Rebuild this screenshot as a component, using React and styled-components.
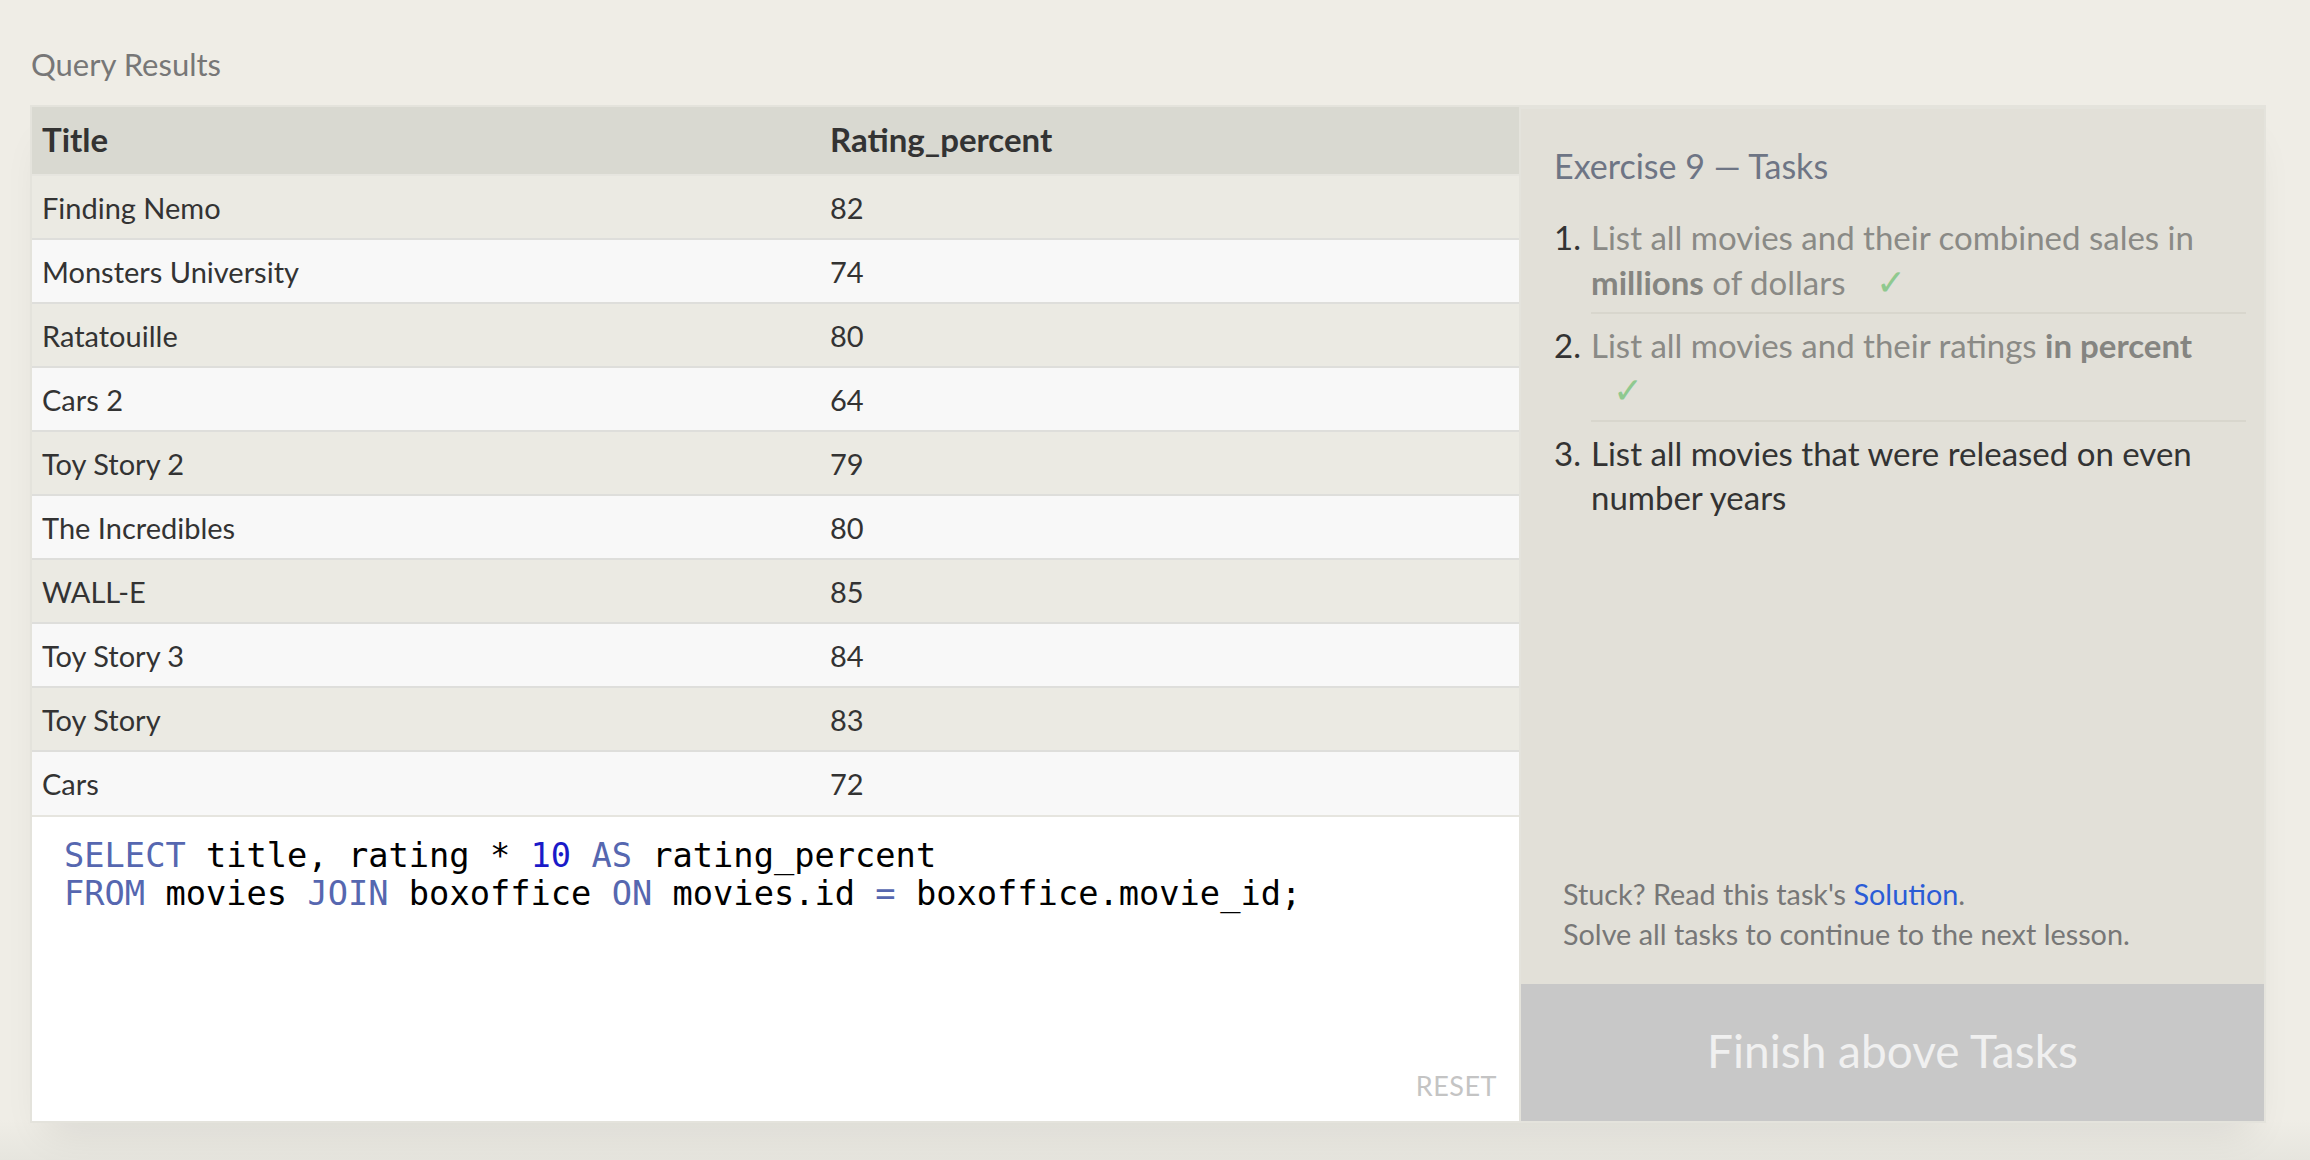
import React from "react";
import styled, { createGlobalStyle } from "styled-components";

const Global = createGlobalStyle`
  html, body {
    margin: 0;
    padding: 0;
    background: #efede6;
  }
  body {
    font-family: "Lato", "Liberation Sans", sans-serif;
    color: #333;
  }
`;

const Page = styled.div`
  width: 2310px;
  height: 1160px;
  box-sizing: border-box;
  padding: 44px 0 0 30px;
  overflow: hidden;
  background: linear-gradient(to bottom, #efede6 0, #efede6 1120px, #e6e5de 1160px);
`;

const Heading = styled.h2`
  margin: 0 0 21px 1px;
  font-size: 31px;
  line-height: 40px;
  font-weight: 400;
  color: #777;
`;

const Frame = styled.div`
  width: 2236px;
  height: 1018px;
  box-sizing: border-box;
  display: flex;
  border: 2px solid #e4e3dc;
  background: #e4e3dc;
  box-shadow: 0 24px 40px -16px rgba(0, 0, 0, 0.09);
`;

const LeftPanel = styled.div`
  width: 1487px;
  flex: none;
  display: flex;
  flex-direction: column;
  background: #fff;
`;

const Table = styled.table`
  width: 100%;
  border-collapse: collapse;
  font-size: 29px;
  color: #333;
`;

const HeadCell = styled.th`
  height: 68px;
  padding: 0 10px 4px;
  text-align: left;
  font-size: 33px;
  font-weight: 700;
  background: #d9d9d1;
  width: ${(p) => p.$w || "auto"};
  box-sizing: border-box;
`;

const Row = styled.tr`
  background: ${(p) => (p.$odd ? "#ebeae3" : "#f8f8f8")};
  border-top: 2px solid ${(p) => (p.$first ? "#e6e5df" : "#dededb")};
`;

const Cell = styled.td`
  height: 64px;
  padding: 0 10px;
  box-sizing: border-box;
`;

const CodeArea = styled.div`
  position: relative;
  flex: 1;
  border-top: 2px solid #e6e5df;
  padding: 20px 0 0 32px;
  font-family: "DejaVu Sans Mono", "Liberation Mono", monospace;
  font-size: 33.7px;
  line-height: 38px;
  color: #000;
  white-space: pre;
`;

const Kw = styled.span`
  color: ${(p) => (p.$num ? "#1a1ac8" : "#5667b0")};
`;

const Reset = styled.div`
  position: absolute;
  right: 22px;
  bottom: 16px;
  font-family: "Lato", "Liberation Sans", sans-serif;
  font-size: 27px;
  color: #c4c4c4;
  letter-spacing: 0.5px;
`;

const RightPanel = styled.div`
  flex: 1;
  margin-left: 2px;
  margin-top: 2px;
  display: flex;
  flex-direction: column;
  background: #e2e0d8;
`;

const TaskBody = styled.div`
  flex: 1;
  padding: 36px 18px 0 33px;
  display: flex;
  flex-direction: column;
`;

const TaskTitle = styled.h3`
  margin: 0 0 19px;
  font-size: 34px;
  line-height: 42px;
  font-weight: 400;
  color: #6e7585;
`;

const TaskList = styled.ol`
  margin: 0;
  padding: 0;
  list-style: none;
`;

const Task = styled.li`
  display: flex;
  font-size: 33px;
  line-height: 44px;
`;

const Num = styled.span`
  width: 37px;
  flex: none;
  color: #333;
  padding-top: 9px;
`;

const TaskText = styled.div`
  flex: 1;
  padding: 9px 0 8px;
  border-bottom: ${(p) => (p.$last ? "none" : "2px solid #d8d6cd")};
  color: ${(p) => (p.$done ? "#8a8a86" : "#333")};
  b {
    font-weight: 700;
    color: #858581;
  }
`;

const Check = styled.span`
  display: inline-block;
  width: 30px;
  margin-left: 22px;
  color: #8fc98f;
  font-size: 36px;
`;

const Footer = styled.div`
  margin-top: auto;
  padding: 0 0 30px 9px;
  font-size: 28.8px;
  line-height: 40px;
  color: #777;
  a {
    color: #2a5cd6;
    text-decoration: none;
  }
`;

const FinishButton = styled.div`
  height: 137px;
  flex: none;
  display: flex;
  align-items: center;
  justify-content: center;
  background: #c8c8c8;
  color: #f0f0f0;
  font-size: 46px;
  padding-bottom: 4px;
  box-sizing: border-box;
`;

const rows = [
  ["Finding Nemo", 82],
  ["Monsters University", 74],
  ["Ratatouille", 80],
  ["Cars 2", 64],
  ["Toy Story 2", 79],
  ["The Incredibles", 80],
  ["WALL-E", 85],
  ["Toy Story 3", 84],
  ["Toy Story", 83],
  ["Cars", 72],
];

export default function App() {
  return (
    <>
      <Global />
      <Page>
        <Heading>Query Results</Heading>
        <Frame>
          <LeftPanel>
            <Table>
              <thead>
                <tr>
                  <HeadCell $w="788px">Title</HeadCell>
                  <HeadCell>Rating_percent</HeadCell>
                </tr>
              </thead>
              <tbody>
                {rows.map(([t, r], i) => (
                  <Row key={t} $odd={i % 2 === 0} $first={i === 0}>
                    <Cell>{t}</Cell>
                    <Cell>{r}</Cell>
                  </Row>
                ))}
              </tbody>
            </Table>
            <CodeArea>
              <Kw>SELECT</Kw> title, rating * <Kw $num>10</Kw> <Kw>AS</Kw> rating_percent{"\n"}
              <Kw>FROM</Kw> movies <Kw>JOIN</Kw> boxoffice <Kw>ON</Kw> movies.id <Kw>=</Kw> boxoffice.movie_id;
              <Reset>RESET</Reset>
            </CodeArea>
          </LeftPanel>
          <RightPanel>
            <TaskBody>
              <TaskTitle>Exercise 9 — Tasks</TaskTitle>
              <TaskList>
                <Task>
                  <Num>1.</Num>
                  <TaskText $done>
                    List all movies and their combined sales in <b>millions</b> of dollars <Check>✓</Check>
                  </TaskText>
                </Task>
                <Task>
                  <Num>2.</Num>
                  <TaskText $done>
                    List all movies and their ratings <b>in percent</b> <Check>✓</Check>
                  </TaskText>
                </Task>
                <Task>
                  <Num>3.</Num>
                  <TaskText $last>List all movies that were released on even number years</TaskText>
                </Task>
              </TaskList>
              <Footer>
                Stuck? Read this task's <a href="#">Solution</a>.<br />
                Solve all tasks to continue to the next lesson.
              </Footer>
            </TaskBody>
            <FinishButton>Finish above Tasks</FinishButton>
          </RightPanel>
        </Frame>
      </Page>
    </>
  );
}
